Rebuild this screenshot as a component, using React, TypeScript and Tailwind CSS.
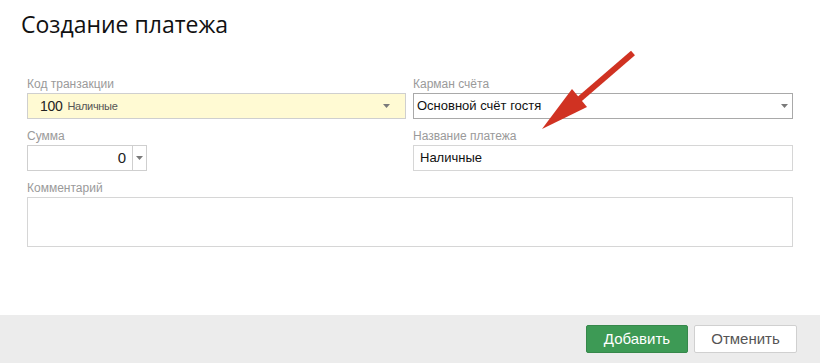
import React from "react";

const Caret = () => (
  <svg width="7" height="4" viewBox="0 0 7 4" className="shrink-0">
    <path d="M0 0 L7 0 L3.5 4 Z" fill="#7a7a7a" />
  </svg>
);

export default function App() {
  return (
    <div
      className="relative w-[820px] h-[363px] bg-white flex flex-col overflow-hidden"
      style={{ fontFamily: '"Liberation Sans", "Noto Sans", sans-serif' }}
    >
      <h1
        className="pl-[21px] pt-[9px] h-[72px] text-[23px] leading-[30px] text-[#111]"
        style={{ fontFamily: '"Open Sans", "Noto Sans", sans-serif' }}
      >
        Создание платежа
      </h1>

      <div className="px-[27px] flex-1">
        <div className="grid grid-cols-[379px_380px] gap-x-[7px]">
          <div className="flex flex-col">
            <label className="text-[12px] leading-[15px] text-[#9a9a9a] mt-[5px]">Код транзакции</label>
            <div className="h-[26px] mt-[1px] border border-[#cfcfcf] bg-[#fffad3] flex items-center pl-[12px] pr-[15px]">
              <span className="text-[14px] text-[#222] tracking-[-0.3px]">100</span>
              <span className="text-[11px] text-[#555] ml-[5px] tracking-[-0.3px]">Наличные</span>
              <span className="flex-1" />
              <Caret />
            </div>
            <label className="text-[12px] leading-[15px] text-[#9a9a9a] mt-[10px]">Сумма</label>
            <div className="h-[26px] mt-[1px] w-[120px] border border-[#cfcfcf] bg-white flex items-center">
              <span className="flex-1 text-right text-[15px] text-[#222] pr-[6px]">0</span>
              <span className="w-px h-full bg-[#cfcfcf]" />
              <span className="w-[13px] flex justify-center">
                <Caret />
              </span>
            </div>
          </div>
          <div className="flex flex-col">
            <label className="text-[12px] leading-[15px] text-[#9a9a9a] mt-[5px]">Карман счёта</label>
            <div className="h-[26px] mt-[1px] border border-[#a9a9a9] bg-white flex items-center pl-[3px] pr-[4px]">
              <span className="text-[13px] text-[#111]">Основной счёт гостя</span>
              <span className="flex-1" />
              <Caret />
            </div>
            <label className="text-[12px] leading-[15px] text-[#9a9a9a] mt-[10px]">Название платежа</label>
            <div className="h-[26px] mt-[1px] border border-[#d6d6d6] bg-white flex items-center pl-[6px]">
              <span className="text-[13px] text-[#111]">Наличные</span>
            </div>
          </div>
          <div className="col-span-2 flex flex-col">
            <label className="text-[12px] leading-[15px] text-[#9a9a9a] mt-[10px]">Комментарий</label>
            <div className="h-[50px] mt-[1px] border border-[#d6d6d6] bg-white" />
          </div>
        </div>
      </div>

      <div className="h-[48px] bg-[#ececec] flex items-center justify-end gap-[6px] pr-[23px]">
        <button className="w-[102px] h-[28px] rounded-[2px] bg-[#3d9a55] border border-[#36884b] text-white text-[15px]">
          Добавить
        </button>
        <button className="w-[103px] h-[28px] rounded-[2px] bg-white border border-[#d0d0d0] text-[#555] text-[15px]">
          Отменить
        </button>
      </div>

      <svg className="absolute left-0 top-0 pointer-events-none" width="820" height="363">
        <line x1="633" y1="53" x2="575" y2="103" stroke="#d03222" strokeWidth="6" />
        <polygon points="542,129 572,89 587,107" fill="#d03222" />
      </svg>
    </div>
  );
}
